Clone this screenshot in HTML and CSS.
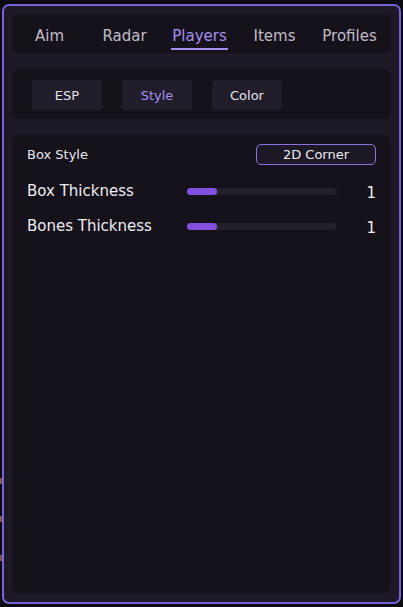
FILE: index.html
```html
<!DOCTYPE html>
<html lang="en">
<head>
    <meta charset="UTF-8">
    <meta name="viewport" content="width=device-width, initial-scale=1.0">
    <title>Players - Style</title>
    <link rel="stylesheet" href="styles.css">
</head>
<body>
    <div class="marks">
        <span class="mark mark-1"></span>
        <span class="mark mark-2"></span>
        <span class="mark mark-3"></span>
    </div>

    <div class="window">
        <nav class="tabs">
            <a class="tab"><span>Aim</span></a>
            <a class="tab"><span>Radar</span></a>
            <a class="tab active"><span>Players</span></a>
            <a class="tab"><span>Items</span></a>
            <a class="tab"><span>Profiles</span></a>
        </nav>

        <div class="subtabs">
            <button class="subtab">ESP</button>
            <button class="subtab active">Style</button>
            <button class="subtab">Color</button>
        </div>

        <div class="panel">
            <div class="row row-select">
                <span class="label-small">Box Style</span>
                <button class="select">2D Corner</button>
            </div>

            <div class="row">
                <span class="label">Box Thickness</span>
                <div class="slider">
                    <div class="slider-fill" style="width: 20%"></div>
                </div>
                <span class="value">1</span>
            </div>

            <div class="row">
                <span class="label">Bones Thickness</span>
                <div class="slider">
                    <div class="slider-fill" style="width: 20%"></div>
                </div>
                <span class="value">1</span>
            </div>
        </div>
    </div>
</body>
</html>
```

FILE: styles.css
```css
body {
    font-family: "DejaVu Sans", Verdana, sans-serif;
    background-color: #0d0b12;
    margin: 0;
    padding: 4px 2px 3px 2px;
    height: 607px;
    box-sizing: border-box;
    position: relative;
}

.window {
    height: 100%;
    box-sizing: border-box;
    border: 2px solid #7b5fd6;
    border-radius: 7px;
    background-color: #1d1926;
    padding: 8px 8px 9px 8px;
    display: flex;
    flex-direction: column;
    gap: 16px;
}

/* top tabs */
.tabs {
    background-color: #15121c;
    border-radius: 6px;
    height: 39px;
    display: flex;
    align-items: center;
    padding: 0;
}

.tab {
    width: 75px;
    text-align: center;
    color: #c0bcc8;
    font-size: 15px;
}

.tab span {
    display: inline-block;
    padding: 9px 1px 3px 1px;
    border-bottom: 2px solid transparent;
}

.tab.active {
    color: #a48ef0;
}

.tab.active span {
    border-bottom-color: #a48ef0;
}

/* sub tabs */
.subtabs {
    background-color: #15121c;
    border-radius: 6px;
    height: 50px;
    display: flex;
    align-items: center;
    gap: 20px;
    padding: 2px 20px 0 20px;
    box-sizing: border-box;
}

.subtab {
    font-family: inherit;
    width: 70px;
    height: 30px;
    border: none;
    border-radius: 4px;
    background-color: #221d2b;
    color: #e4e2ea;
    font-size: 13px;
}

.subtab.active {
    color: #a48ef0;
}

/* content */
.panel {
    flex: 1;
    background-color: #15121c;
    border-radius: 6px;
    padding: 9px 15px 0 15px;
}

.row {
    display: flex;
    align-items: center;
    height: 35px;
}

.row-select {
    height: 20px;
    justify-content: space-between;
    margin-bottom: 9px;
}

.label-small {
    color: #e8e6ee;
    font-size: 13px;
}

.label {
    color: #eeecf2;
    font-size: 15px;
    width: 160px;
}

.select {
    font-family: inherit;
    width: 120px;
    height: 21px;
    border: 1px solid #8c72e0;
    border-radius: 5px;
    background-color: #1c1826;
    color: #ecebf0;
    font-size: 13px;
    padding: 0;
}

.slider {
    width: 150px;
    height: 7px;
    background-color: #231f2c;
    border-radius: 4px;
    margin-top: 2px;
}

.slider-fill {
    height: 100%;
    background-color: #8550e0;
    border-radius: 4px;
}

.value {
    flex: 1;
    text-align: right;
    color: #eeecf2;
    font-size: 15px;
    margin-top: 4px;
}

/* little marks on the left edge */
.mark {
    position: absolute;
    left: 0;
    width: 2px;
    height: 6px;
    background-color: #7a5a58;
}

.mark-1 { top: 478px; }
.mark-2 { top: 516px; }
.mark-3 { top: 555px; }
```
